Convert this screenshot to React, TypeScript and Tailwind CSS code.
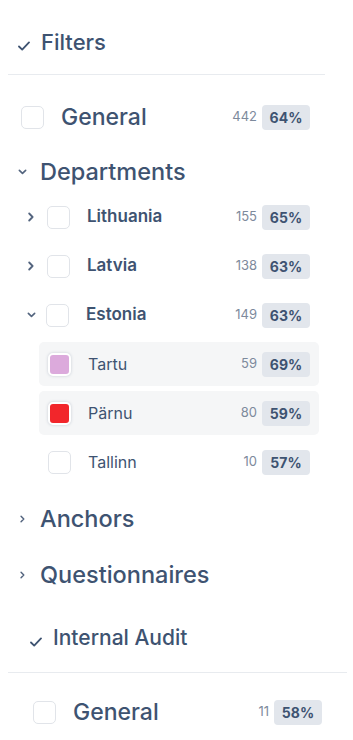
import React from 'react';

const ink = 'text-[#3e5371]';

function Check({ className = '' }: { className?: string }) {
  return (
    <svg viewBox="0 0 12 10" className={className} fill="none" stroke="#3e5371" strokeWidth="1.8" strokeLinecap="round" strokeLinejoin="round">
      <polyline points="1,5.5 4.2,8.6 11,1.4" />
    </svg>
  );
}

function ChevronRight({ className = '' }: { className?: string }) {
  return (
    <svg viewBox="0 0 6 10" className={className} fill="none" stroke="#53647e" strokeWidth="1.8" strokeLinecap="round" strokeLinejoin="round">
      <polyline points="1.2,1.5 4.6,5 1.2,8.5" />
    </svg>
  );
}

function ChevronDown({ className = '' }: { className?: string }) {
  return (
    <svg viewBox="0 0 10 6" className={className} fill="none" stroke="#53647e" strokeWidth="1.8" strokeLinecap="round" strokeLinejoin="round">
      <polyline points="1.5,1.2 5,4.6 8.5,1.2" />
    </svg>
  );
}

function Box({ color }: { color?: string }) {
  if (color) {
    return (
      <span
        className="block w-[23px] h-[23px] rounded-[5px] border-2 border-white shadow-[0_0_3px_rgba(60,80,110,0.25)] shrink-0"
        style={{ backgroundColor: color }}
      />
    );
  }
  return <span className="block w-[23px] h-[23px] rounded-[5px] border border-[#e1e4e9] bg-white shrink-0" />;
}

function Stat({ count, pct }: { count: number; pct: string }) {
  return (
    <div className="ml-auto flex items-center gap-[5px]">
      <span className="text-[13px] text-[#7d8a9c]">{count}</span>
      <span className="w-[48px] h-[25px] rounded-[4px] bg-[#e2e6ec] flex items-center justify-center text-[14px] font-bold text-[#3e5371]">
        {pct}
      </span>
    </div>
  );
}

const departments = [
  { name: 'Lithuania', count: 155, pct: '65%', open: false },
  { name: 'Latvia', count: 138, pct: '63%', open: false },
  { name: 'Estonia', count: 149, pct: '63%', open: true },
];

const cities = [
  { name: 'Tartu', count: 59, pct: '69%', color: '#dcaadc', active: true },
  { name: 'Pärnu', count: 80, pct: '59%', color: '#f2262b', active: true },
  { name: 'Tallinn', count: 10, pct: '57%', color: undefined, active: false },
];

export default function App() {
  return (
    <div className={`w-[353px] h-[740px] overflow-hidden bg-white ${ink}`} style={{ fontFamily: 'Inter, "Noto Sans", sans-serif' }}>
      {/* Filters */}
      <div className="px-2 w-[333px]">
        <div className="h-[75px] pt-[30px] pl-[10px] border-b border-[#e8ebef] flex items-start">
          <div className="flex items-center h-[24px]">
            <Check className="w-[12px] h-[10px] mt-[7px]" />
            <span className="ml-[11px] text-[22px] leading-[24px] font-medium">Filters</span>
          </div>
        </div>

        <div className="mt-[20px] h-[44px] flex items-center pl-[13px] pr-[15px]">
          <Box />
          <span className="ml-[17px] text-[23px] font-medium">General</span>
          <Stat count={442} pct="64%" />
        </div>

        <div className="mt-[11px] h-[44px] flex items-center pl-[10px]">
          <ChevronDown className="w-[9px] h-[6px]" />
          <span className="ml-[13px] text-[23.5px] font-medium">Departments</span>
        </div>

        <div className="mt-[1px] flex flex-col gap-[5px]">
          {departments.map((d) => (
            <div key={d.name} className="h-[44px] flex items-center pl-[20px] pr-[15px]">
              {d.open ? <ChevronDown className="w-[9px] h-[6px] -ml-[1px]" /> : <ChevronRight className="w-[6px] h-[10px]" />}
              <span className={d.open ? 'ml-[10px]' : 'ml-[13px]'}>
                <Box />
              </span>
              <span className="ml-[17px] text-[17px] font-semibold">{d.name}</span>
              <Stat count={d.count} pct={d.pct} />
            </div>
          ))}
          {cities.map((c) => (
            <div
              key={c.name}
              className={`h-[44px] ml-[31px] mr-[6px] pl-[9px] pr-[9px] rounded-[5px] flex items-center ${c.active ? 'bg-[#f5f6f7]' : ''}`}
            >
              <Box color={c.color} />
              <span className="ml-[17px] text-[16px]">{c.name}</span>
              <Stat count={c.count} pct={c.pct} />
            </div>
          ))}
        </div>

        <div className="mt-[13px] h-[44px] flex items-center pl-[12px]">
          <ChevronRight className="w-[5px] h-[8px]" />
          <span className="ml-[15px] text-[23.5px] font-medium">Anchors</span>
        </div>
        <div className="mt-[12px] h-[44px] flex items-center pl-[12px]">
          <ChevronRight className="w-[5px] h-[8px]" />
          <span className="ml-[15px] text-[23.5px] font-medium">Questionnaires</span>
        </div>
      </div>

      {/* Internal Audit */}
      <div className="px-2 w-[355px]">
        <div className="h-[76px] pt-[29px] pl-[22px] border-b border-[#e8ebef] flex items-start">
          <div className="flex items-center h-[24px]">
            <Check className="w-[12px] h-[10px] mt-[7px]" />
            <span className="ml-[11px] text-[21px] leading-[24px] font-medium">Internal Audit</span>
          </div>
        </div>
        <div className="mt-[17px] h-[44px] flex items-center pl-[25px] pr-[25px]">
          <Box />
          <span className="ml-[17px] text-[23px] font-medium">General</span>
          <Stat count={11} pct="58%" />
        </div>
      </div>
    </div>
  );
}
